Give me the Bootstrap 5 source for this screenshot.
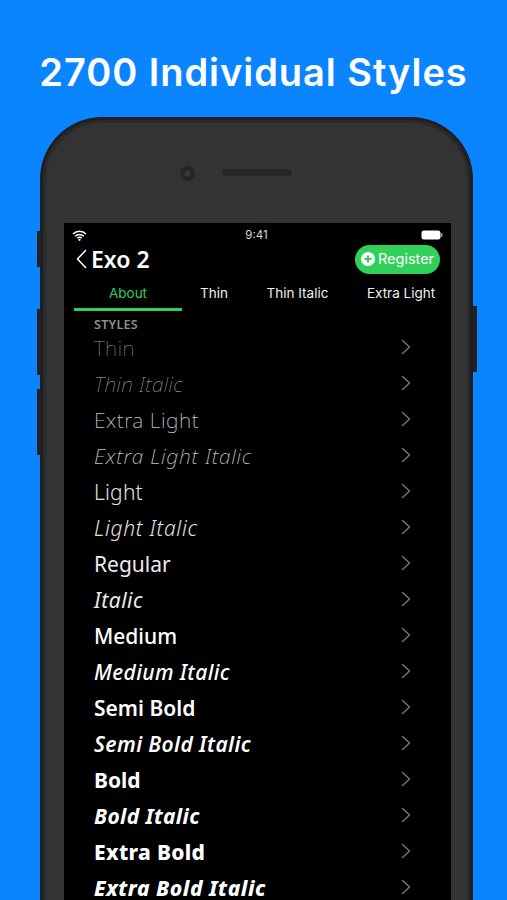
<!DOCTYPE html>
<html lang="en"><head><meta charset="utf-8"><title>Exo 2</title>
<link href="https://cdn.jsdelivr.net/npm/bootstrap@5.3.0/dist/css/bootstrap.min.css" rel="stylesheet">
<style>
html,body{height:900px;overflow:hidden}
body{background:#0a84ff;width:507px;font-family:"Inter","Liberation Sans",sans-serif;color:#fff}
.headline{font-size:38px;font-weight:600;line-height:46px;letter-spacing:.95px;padding-top:49px;height:117px;margin:0;text-align:center;color:#fff;font-family:"Inter",sans-serif}
.phone{position:relative;margin-left:40px;width:433px;height:900px;background:#333;border:3px solid #1f1f1f;border-bottom:0;border-radius:62px 62px 0 0;box-shadow:inset 0 0 0 3px #2a2a2a}
.sidekey{position:absolute;background:#222;width:4px}
.k1{left:-6px;top:111px;height:36px}.k2{left:-6px;top:189px;height:66px}.k3{left:-6px;top:269px;height:66px}.k4{right:-7px;top:186px;height:66px}
.cam{position:absolute;left:137px;top:46px;width:15px;height:15px;border-radius:50%;background:#2a2a2a;border:3px solid #252525}
.cam::after{content:"";display:block;width:5px;height:5px;margin:2px;border-radius:50%;background:#3a3a3a}
.speaker{position:absolute;left:179px;top:49px;width:70px;height:7px;border-radius:4px;background:#272727}
.screen{position:absolute;left:21px;top:103px;width:387px;height:800px;background:#000}
.statusline{height:24px;padding:0 8px 0 8px;font-size:11.5px;font-weight:400;color:#d8d8d8}
.clock{margin-left:5px;margin-top:2px}
.titlebar{height:24px;margin-bottom:4px;padding:0 11px 0 12px}
.apptitle{font-size:23px;font-weight:600;line-height:1;margin-left:4px;font-family:"Noto Sans",sans-serif}
.regbtn{background:#30d158;color:#fff;border:0;border-radius:15px;height:29px;width:85px;font-size:14.5px;padding:0;gap:3px;line-height:1;font-family:"Inter",sans-serif;font-weight:400}
.regbtn:hover{background:#30d158;color:#fff}
.tabstrip{height:36px;font-size:13.5px;font-weight:400;font-family:"Inter",sans-serif;margin:0 0 0 10px;color:#f0f0f0}
.tabcell{width:108px;text-align:center;padding-top:8px;height:36px;flex:none;white-space:nowrap}
.tabcell.active{color:#30d158;border-bottom:3px solid #30d158}
.tabcell.w2{width:64px}.tabcell.w3{width:103px}.tabcell.w4{width:104px}
.sectionlabel{font-size:12.5px;font-weight:600;color:#8e8e93;padding-left:30px;line-height:14px;padding-top:7px;letter-spacing:.3px;font-family:"Noto Sans",sans-serif}
.stylerow{height:36px;padding:0 40px 0 30px;font-size:21px;line-height:36px;font-family:"Noto Sans",sans-serif;margin:0}
.stylerow:first-of-type{margin-top:-3px}
.stylerow span{margin-top:2px}
.w100{font-weight:100;color:#999;letter-spacing:.5px}.w200{font-weight:200;color:#c4c4c4;letter-spacing:.5px}.w300{font-weight:300;color:#e2e2e2;letter-spacing:.2px}
.w400{font-weight:400;color:#ececec}.w500{font-weight:500}.w600{font-weight:600}.w700{font-weight:700}.w800{font-weight:800}
.w800{letter-spacing:.3px}
.it{font-style:italic}
.w100.it{letter-spacing:.35px;color:#aaa}.w200.it{letter-spacing:.7px}.w300.it{letter-spacing:.7px}.w400.it{letter-spacing:.5px}.w500.it{letter-spacing:.4px}.w600.it{letter-spacing:.4px}.w700.it{letter-spacing:.4px}.w800.it{letter-spacing:.55px}
</style></head><body>
<h1 class="headline">2700 Individual Styles</h1>
<div class="phone">
 <span class="sidekey k1"></span><span class="sidekey k2"></span><span class="sidekey k3"></span><span class="sidekey k4"></span>
 <span class="cam"></span><span class="speaker"></span>
 <div class="screen">
  <div class="statusline d-flex align-items-center justify-content-between">
   <svg width="15" height="11" viewBox="0 0 15 11"><path d="M1 4a9 9 0 0 1 13 0M3.2 6.2a6 6 0 0 1 8.6 0M5.3 8.2a3 3 0 0 1 4.4 0" fill="none" stroke="#fff" stroke-width="1.5"/><circle cx="7.5" cy="9.8" r="1.1" fill="#fff"/></svg>
   <span class="clock">9:41</span>
   <svg width="22" height="10" viewBox="0 0 22 10"><rect x="0.5" y="0.5" width="19" height="9" rx="2.5" fill="#fff"/><rect x="20" y="3" width="1.5" height="4" rx=".7" fill="#999"/></svg>
  </div>
  <div class="titlebar d-flex align-items-center justify-content-between">
   <div class="d-flex align-items-center">
    <svg width="11" height="20" viewBox="0 0 11 20"><path d="M10 1 1.5 10l8.5 9" fill="none" stroke="#fff" stroke-width="1.5"/></svg>
    <span class="apptitle">Exo 2</span>
   </div>
   <button class="btn regbtn d-flex align-items-center justify-content-center">
    <svg width="14" height="14" viewBox="0 0 14 14"><circle cx="7" cy="7" r="7" fill="#fff"/><path d="M7 3.5v7M3.5 7h7" stroke="#30d158" stroke-width="2"/></svg>Register</button>
  </div>
  <div class="tabstrip d-flex">
   <div class="tabcell active">About</div><div class="tabcell w2">Thin</div><div class="tabcell w3">Thin Italic</div><div class="tabcell w4">Extra Light</div>
  </div>
  <div class="sectionlabel">STYLES</div>
  <div>
  <div class="stylerow d-flex justify-content-between align-items-center"><span class="w100">Thin</span><svg width="10" height="16" viewBox="0 0 10 16"><path d="m1 1 7.5 7L1 15" fill="none" stroke="#777" stroke-width="1.4"/></svg></div>
  <div class="stylerow d-flex justify-content-between align-items-center"><span class="w100 it">Thin Italic</span><svg width="10" height="16" viewBox="0 0 10 16"><path d="m1 1 7.5 7L1 15" fill="none" stroke="#777" stroke-width="1.4"/></svg></div>
  <div class="stylerow d-flex justify-content-between align-items-center"><span class="w200">Extra Light</span><svg width="10" height="16" viewBox="0 0 10 16"><path d="m1 1 7.5 7L1 15" fill="none" stroke="#777" stroke-width="1.4"/></svg></div>
  <div class="stylerow d-flex justify-content-between align-items-center"><span class="w200 it">Extra Light Italic</span><svg width="10" height="16" viewBox="0 0 10 16"><path d="m1 1 7.5 7L1 15" fill="none" stroke="#777" stroke-width="1.4"/></svg></div>
  <div class="stylerow d-flex justify-content-between align-items-center"><span class="w300">Light</span><svg width="10" height="16" viewBox="0 0 10 16"><path d="m1 1 7.5 7L1 15" fill="none" stroke="#777" stroke-width="1.4"/></svg></div>
  <div class="stylerow d-flex justify-content-between align-items-center"><span class="w300 it">Light Italic</span><svg width="10" height="16" viewBox="0 0 10 16"><path d="m1 1 7.5 7L1 15" fill="none" stroke="#777" stroke-width="1.4"/></svg></div>
  <div class="stylerow d-flex justify-content-between align-items-center"><span class="w400">Regular</span><svg width="10" height="16" viewBox="0 0 10 16"><path d="m1 1 7.5 7L1 15" fill="none" stroke="#777" stroke-width="1.4"/></svg></div>
  <div class="stylerow d-flex justify-content-between align-items-center"><span class="w400 it">Italic</span><svg width="10" height="16" viewBox="0 0 10 16"><path d="m1 1 7.5 7L1 15" fill="none" stroke="#777" stroke-width="1.4"/></svg></div>
  <div class="stylerow d-flex justify-content-between align-items-center"><span class="w500">Medium</span><svg width="10" height="16" viewBox="0 0 10 16"><path d="m1 1 7.5 7L1 15" fill="none" stroke="#777" stroke-width="1.4"/></svg></div>
  <div class="stylerow d-flex justify-content-between align-items-center"><span class="w500 it">Medium Italic</span><svg width="10" height="16" viewBox="0 0 10 16"><path d="m1 1 7.5 7L1 15" fill="none" stroke="#777" stroke-width="1.4"/></svg></div>
  <div class="stylerow d-flex justify-content-between align-items-center"><span class="w600">Semi Bold</span><svg width="10" height="16" viewBox="0 0 10 16"><path d="m1 1 7.5 7L1 15" fill="none" stroke="#777" stroke-width="1.4"/></svg></div>
  <div class="stylerow d-flex justify-content-between align-items-center"><span class="w600 it">Semi Bold Italic</span><svg width="10" height="16" viewBox="0 0 10 16"><path d="m1 1 7.5 7L1 15" fill="none" stroke="#777" stroke-width="1.4"/></svg></div>
  <div class="stylerow d-flex justify-content-between align-items-center"><span class="w700">Bold</span><svg width="10" height="16" viewBox="0 0 10 16"><path d="m1 1 7.5 7L1 15" fill="none" stroke="#777" stroke-width="1.4"/></svg></div>
  <div class="stylerow d-flex justify-content-between align-items-center"><span class="w700 it">Bold Italic</span><svg width="10" height="16" viewBox="0 0 10 16"><path d="m1 1 7.5 7L1 15" fill="none" stroke="#777" stroke-width="1.4"/></svg></div>
  <div class="stylerow d-flex justify-content-between align-items-center"><span class="w800">Extra Bold</span><svg width="10" height="16" viewBox="0 0 10 16"><path d="m1 1 7.5 7L1 15" fill="none" stroke="#777" stroke-width="1.4"/></svg></div>
  <div class="stylerow d-flex justify-content-between align-items-center"><span class="w800 it">Extra Bold Italic</span><svg width="10" height="16" viewBox="0 0 10 16"><path d="m1 1 7.5 7L1 15" fill="none" stroke="#777" stroke-width="1.4"/></svg></div>
  </div>
 </div>
</div>
<script src="https://cdn.jsdelivr.net/npm/bootstrap@5.3.0/dist/js/bootstrap.bundle.min.js"></script>
</body></html>
